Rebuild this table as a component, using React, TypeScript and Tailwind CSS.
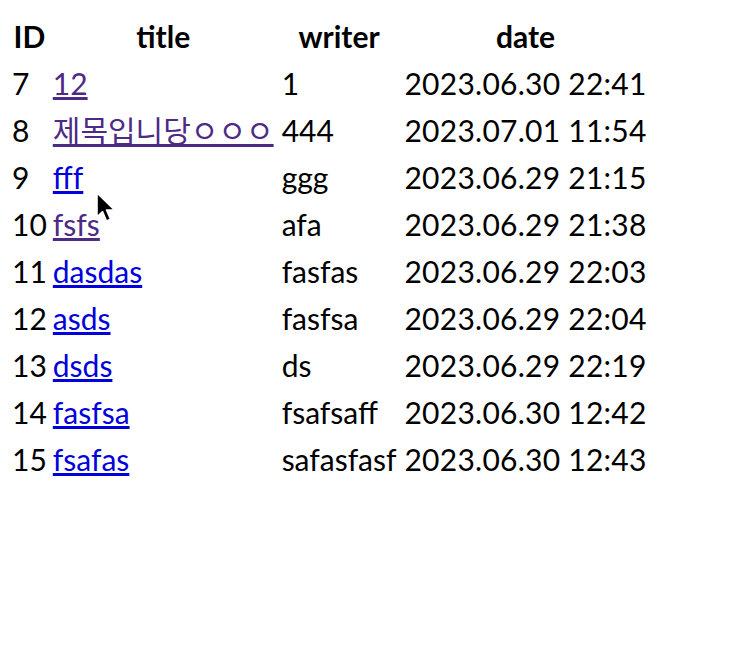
const rows = [
  { id: 7, title: "12", writer: "1", date: "2023.06.30 22:41", visited: true },
  { id: 8, title: "제목입니당ㅇㅇㅇ", writer: "444", date: "2023.07.01 11:54", visited: true },
  { id: 9, title: "fff", writer: "ggg", date: "2023.06.29 21:15", visited: false },
  { id: 10, title: "fsfs", writer: "afa", date: "2023.06.29 21:38", visited: true },
  { id: 11, title: "dasdas", writer: "fasfas", date: "2023.06.29 22:03", visited: false },
  { id: 12, title: "asds", writer: "fasfsa", date: "2023.06.29 22:04", visited: false },
  { id: 13, title: "dsds", writer: "ds", date: "2023.06.29 22:19", visited: false },
  { id: 14, title: "fasfsa", writer: "fsafsaff", date: "2023.06.30 12:42", visited: false },
  { id: 15, title: "fsafas", writer: "safasfasf", date: "2023.06.30 12:43", visited: false },
];

function Cursor() {
  return (
    <svg className="absolute left-[95px] top-[191px]" width="22" height="34" viewBox="0 0 22 34">
      <path d="M2 2 L2 26 L7.5 20.5 L11.5 30 L15.5 28.3 L11.5 19 L19.5 19 Z" fill="#000" stroke="#fff" strokeWidth="1.6" strokeLinejoin="round" />
    </svg>
  );
}

export default function App() {
  return (
    <div className="relative min-h-[668px] bg-white px-2 pt-[13px] text-[30px] leading-[43px] text-black [font-family:Lato,'Noto_Sans_CJK_KR',sans-serif]">
      <table className="border-separate border-spacing-[2px]">
        <thead>
          <tr>
            <th className="px-[2px] pb-px text-center font-bold">ID</th>
            <th className="pl-[2px] pr-[4px] pb-px text-center font-bold">title</th>
            <th className="pl-[2px] pr-[4px] pb-px text-center font-bold">writer</th>
            <th className="px-[2px] pb-px text-center font-bold">date</th>
          </tr>
        </thead>
        <tbody>
          {rows.map((row) => (
            <tr key={row.id}>
              <td className="px-[2px] py-px">{row.id}</td>
              <td className="pl-[2px] pr-[4px] py-px">
                <a
                  href="#"
                  className={row.visited ? "text-[#4c2a85] underline" : "text-[#0000dd] underline"}
                >
                  {row.title}
                </a>
              </td>
              <td className="pl-[2px] pr-[4px] py-px">{row.writer}</td>
              <td className="px-[2px] py-px tracking-[0.25px]">{row.date}</td>
            </tr>
          ))}
        </tbody>
      </table>
      <Cursor />
    </div>
  );
}
